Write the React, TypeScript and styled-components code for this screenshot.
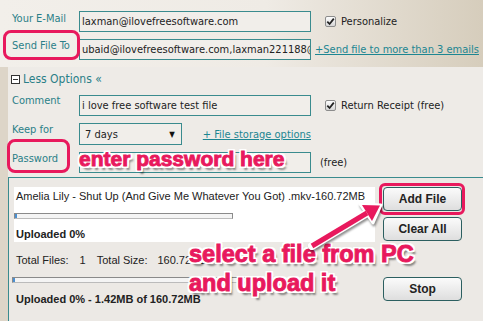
import React from "react";
import styled, { createGlobalStyle } from "styled-components";

const GlobalStyle = createGlobalStyle`
  html, body {
    margin: 0;
    padding: 0;
    background: #ddd5c8;
    overflow: hidden;
  }
`;

const teal = "#2a7f88";
const linkTeal = "#1d8692";
const fieldBorder = "#3a8b8e";
const pink = "#e8195d";

const Page = styled.div`
  position: relative;
  width: 483px;
  height: 321px;
  font-family: "DejaVu Sans Condensed", "DejaVu Sans", sans-serif;
  font-size: 11px;
  color: #222;
  background: #ddd5c8;
  overflow: hidden;
`;

const TopSection = styled.div`
  height: 56px;
  padding: 11px 0 0 12px;
  background: linear-gradient(to right, #f2efea 0%, #efebe5 55%, #d6cdbc 100%);
  display: grid;
  grid-template-columns: 67px 232px auto;
  grid-template-rows: 21px 21px;
  row-gap: 7px;
`;

const Label = styled.div<{ $offset?: number }>`
  color: ${teal};
  line-height: 11px;
  padding-top: ${(p) => p.$offset ?? 0}px;
  white-space: nowrap;
`;

const Field = styled.div`
  box-sizing: border-box;
  height: 100%;
  border: 1px solid ${fieldBorder};
  background: #f1eeea;
  display: flex;
  align-items: center;
  padding: 0 2px;
  overflow: hidden;
  white-space: nowrap;
`;

const Extra = styled.div<{ $indent: number }>`
  display: flex;
  align-items: center;
  gap: 5px;
  padding-left: ${(p) => p.$indent}px;
  white-space: nowrap;
`;

const Link = styled.span`
  color: ${linkTeal};
  text-decoration: underline;
  white-space: nowrap;
`;

const CheckBox = styled.span`
  box-sizing: border-box;
  width: 11px;
  height: 11px;
  border: 1px solid #8c8c8c;
  border-radius: 2px;
  background: linear-gradient(#fdfdfd, #d6d6d6);
  display: inline-flex;
  align-items: center;
  justify-content: center;
`;

const Options = styled.div`
  margin: 0 0 0 8px;
  padding: 6px 0 0 4px;
  height: 104px;
  background: #eeebe7;
  border-bottom: 1px solid ${fieldBorder};
`;

const Toggle = styled.div`
  display: flex;
  align-items: center;
  gap: 3px;
  height: 12px;
  color: ${teal};
  font-size: 12px;
  margin-left: -1px;
`;

const ToggleIcon = styled.span`
  box-sizing: border-box;
  width: 9px;
  height: 9px;
  border: 1px solid #333;
  background: #fff;
  position: relative;
  &::after {
    content: "";
    position: absolute;
    left: 1px;
    right: 1px;
    top: 3px;
    height: 1px;
    background: #333;
  }
`;

const OptionGrid = styled.div`
  margin-top: 10px;
  display: grid;
  grid-template-columns: 67px 232px auto;
  grid-template-rows: 21px 22px 21px;
  row-gap: 7px;
`;

const MidCell = styled.div`
  display: flex;
  align-items: center;
  gap: 21px;
`;

const Select = styled.div`
  box-sizing: border-box;
  width: 126px;
  height: 22px;
  border: 1px solid ${fieldBorder};
  background: #f1eeea;
  display: flex;
  align-items: center;
  justify-content: space-between;
  padding: 0 6px 0 5px;
  font-size: 11px;
`;

const Arrow = styled.span`
  font-size: 8px;
  color: #111;
`;

const Upload = styled.div`
  margin-left: 8px;
  height: 143px;
  box-sizing: border-box;
  border-left: 1px solid ${fieldBorder};
  background: #ece9e5;
  padding: 9px 0 0 5px;
  display: flex;
  gap: 8px;
  font-family: "Liberation Sans", Arial, sans-serif;
  font-size: 11px;
  color: #222;
`;

const FileColumn = styled.div`
  width: 361px;
`;

const FileBox = styled.div`
  background: #fff;
  height: 55px;
  box-sizing: border-box;
  padding: 3px 0 0 2px;
`;

const Line = styled.div<{ $bold?: boolean; $mt?: number }>`
  line-height: 13px;
  white-space: nowrap;
  margin-top: ${(p) => p.$mt ?? 0}px;
  font-weight: ${(p) => (p.$bold ? 700 : 400)};
`;

const Progress = styled.div<{ $w: number; $mt: number }>`
  box-sizing: border-box;
  width: ${(p) => p.$w}px;
  height: 6px;
  margin: ${(p) => p.$mt}px 0 0 -2px;
  border: 1px solid #8a8a8a;
  border-bottom-color: #bbb;
  background: #f4f4f4;
  position: relative;
  &::before {
    content: "";
    position: absolute;
    left: 0;
    top: 0;
    bottom: 0;
    width: 2px;
    background: #4b8fd0;
  }
`;

const Stats = styled.div`
  margin: 12px 0 0 2px;
  display: flex;
  line-height: 13px;
  white-space: nowrap;
`;

const Gap = styled.span<{ $w: number }>`
  display: inline-block;
  width: ${(p) => p.$w}px;
`;

const BottomBlock = styled.div`
  margin-left: 2px;
`;

const ButtonColumn = styled.div`
  display: flex;
  flex-direction: column;
  width: 79px;
`;

const Button = styled.div<{ $mt: number }>`
  box-sizing: border-box;
  height: 24px;
  margin-top: ${(p) => p.$mt}px;
  border: 1px solid #2c5f60;
  border-radius: 4px;
  background: linear-gradient(#fbfbfb, #dedede);
  display: flex;
  align-items: center;
  justify-content: center;
  font-weight: 700;
  font-size: 12px;
  color: #222;
`;

const Highlight = styled.div<{ $x: number; $y: number; $w: number; $h: number; $r: number }>`
  position: absolute;
  left: ${(p) => p.$x}px;
  top: ${(p) => p.$y}px;
  width: ${(p) => p.$w}px;
  height: ${(p) => p.$h}px;
  box-sizing: border-box;
  border: 3px solid ${pink};
  border-radius: ${(p) => p.$r}px;
`;

const Note = styled.div<{ $x: number; $y: number; $size: number }>`
  position: absolute;
  left: ${(p) => p.$x}px;
  top: ${(p) => p.$y}px;
  font-family: "Liberation Sans", Arial, sans-serif;
  font-weight: 700;
  font-size: ${(p) => p.$size}px;
  line-height: 29px;
  color: ${pink};
  white-space: nowrap;
  -webkit-text-stroke: 0.9px ${pink};
  text-shadow:
    2px 0 0 #fff, -2px 0 0 #fff, 0 2px 0 #fff, 0 -2px 0 #fff,
    2px 2px 0 #fff, -2px -2px 0 #fff, 2px -2px 0 #fff, -2px 2px 0 #fff,
    1px 2px 0 #fff, 2px 1px 0 #fff, -1px 2px 0 #fff, 2px -1px 0 #fff,
    3px 4px 2px rgba(0, 0, 0, 0.45);
`;

const Overlay = styled.svg`
  position: absolute;
  left: 0;
  top: 0;
  filter: drop-shadow(1px 2px 1px rgba(0, 0, 0, 0.45));
`;

const Check = () => (
  <svg width="9" height="9" viewBox="0 0 9 9">
    <path d="M1.3 4.6 L3.6 7 L7.8 1.6" fill="none" stroke="#222" strokeWidth="1.8" />
  </svg>
);

export default function App() {
  return (
    <>
      <GlobalStyle />
      <Page>
        <TopSection>
          <Label $offset={2}>Your E-Mail</Label>
          <Field>laxman@ilovefreesoftware.com</Field>
          <Extra $indent={14}>
            <CheckBox>
              <Check />
            </CheckBox>
            Personalize
          </Extra>
          <Label $offset={1}>Send File To</Label>
          <Field>ubaid@ilovefreesoftware.com,laxman221188@</Field>
          <Extra $indent={4}>
            <Link>+Send file to more than 3 emails</Link>
          </Extra>
        </TopSection>

        <Options>
          <Toggle>
            <ToggleIcon />
            Less Options «
          </Toggle>
          <OptionGrid>
            <Label>Comment</Label>
            <Field>i love free software test file</Field>
            <Extra $indent={14}>
              <CheckBox>
                <Check />
              </CheckBox>
              Return Receipt (free)
            </Extra>
            <Label $offset={1}>Keep for</Label>
            <MidCell>
              <Select>
                7 days
                <Arrow>▼</Arrow>
              </Select>
              <Link>+ File storage options</Link>
            </MidCell>
            <div />
            <Label $offset={1}>Password</Label>
            <Field />
            <Extra $indent={9}>(free)</Extra>
          </OptionGrid>
        </Options>

        <Upload>
          <FileColumn>
            <FileBox>
              <Line>Amelia Lily - Shut Up (And Give Me Whatever You Got) .mkv-160.72MB</Line>
              <Progress $w={219} $mt={10} />
              <Line $bold $mt={9}>
                Uploaded 0%
              </Line>
            </FileBox>
            <Stats>
              Total Files:
              <Gap $w={11} />1<Gap $w={11} />Total Size:
              <Gap $w={10} />160.72MB
            </Stats>
            <Progress $w={240} $mt={10} />
            <BottomBlock>
              <Line $bold $mt={10}>
                Uploaded 0% - 1.42MB of 160.72MB
              </Line>
            </BottomBlock>
          </FileColumn>
          <ButtonColumn>
            <Button $mt={0}>Add File</Button>
            <Button $mt={6}>Clear All</Button>
            <Button $mt={36}>Stop</Button>
          </ButtonColumn>
        </Upload>

        <Highlight $x={3} $y={30} $w={77} $h={30} $r={8} />
        <Highlight $x={7} $y={139} $w={63} $h={34} $r={8} />
        <Highlight $x={379} $y={183} $w={86} $h={32} $r={6} />

        <Note $x={79} $y={144} $size={21}>
          enter password here
        </Note>
        <Note $x={189} $y={240} $size={23.5}>
          select a file from PC
          <br />
          and upload it
        </Note>

        <Overlay width="483" height="321" viewBox="0 0 483 321">
          <line x1="312" y1="246" x2="367" y2="213" stroke="#fff" strokeWidth="8" strokeLinecap="round" />
          <polygon points="381,205 373,223 360,204" fill="#fff" stroke="#fff" strokeWidth="3" strokeLinejoin="round" />
          <line x1="312" y1="246" x2="367" y2="213" stroke={pink} strokeWidth="5" />
          <polygon points="380,205.5 372,221 362,205" fill={pink} />
        </Overlay>
      </Page>
    </>
  );
}
